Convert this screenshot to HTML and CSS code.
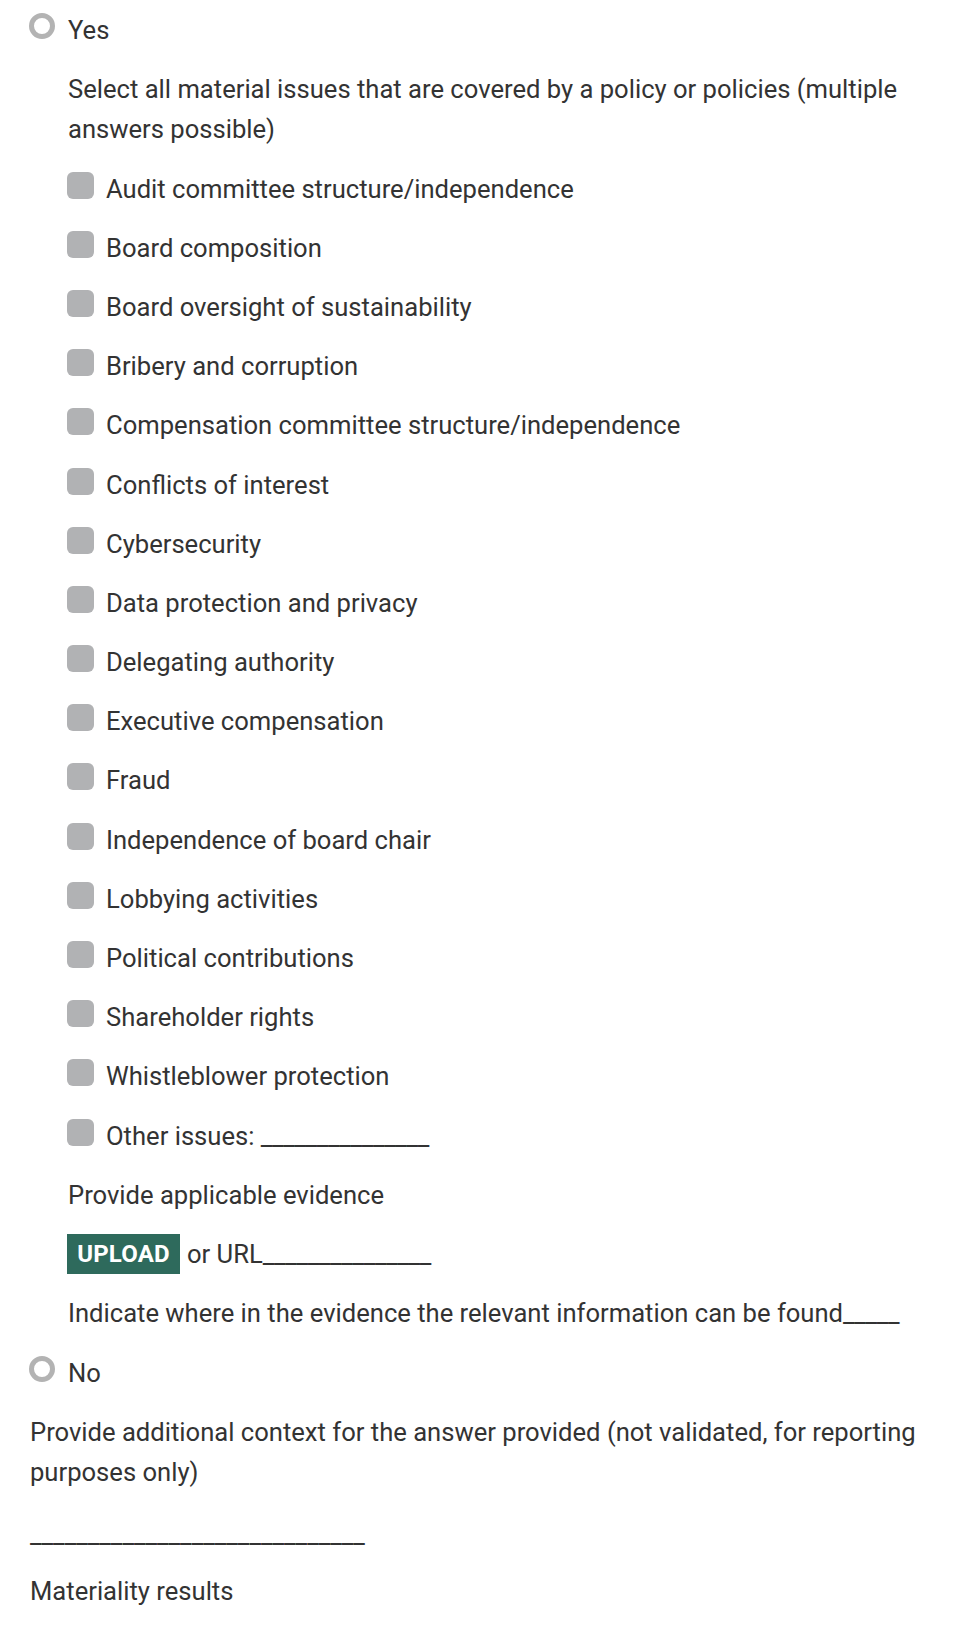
FILE: index.html
```html
<!DOCTYPE html>
<html lang="en">
<head>
<meta charset="utf-8">
<title>Material issues</title>
<link rel="stylesheet" href="styles.css">
</head>
<body>
<main class="question">
  <div class="radio-row">
    <span class="radio"></span>
    <span class="label">Yes</span>
  </div>
  <div class="nested">
    <p class="para">Select all material issues that are covered by a policy or policies (multiple answers possible)</p>
    <ul class="checks">
      <li class="check-row"><span class="box"></span><span>Audit committee structure/independence</span></li>
      <li class="check-row"><span class="box"></span><span>Board composition</span></li>
      <li class="check-row"><span class="box"></span><span>Board oversight of sustainability</span></li>
      <li class="check-row"><span class="box"></span><span>Bribery and corruption</span></li>
      <li class="check-row"><span class="box"></span><span>Compensation committee structure/independence</span></li>
      <li class="check-row"><span class="box"></span><span>Conflicts of interest</span></li>
      <li class="check-row"><span class="box"></span><span>Cybersecurity</span></li>
      <li class="check-row"><span class="box"></span><span>Data protection and privacy</span></li>
      <li class="check-row"><span class="box"></span><span>Delegating authority</span></li>
      <li class="check-row"><span class="box"></span><span>Executive compensation</span></li>
      <li class="check-row"><span class="box"></span><span>Fraud</span></li>
      <li class="check-row"><span class="box"></span><span>Independence of board chair</span></li>
      <li class="check-row"><span class="box"></span><span>Lobbying activities</span></li>
      <li class="check-row"><span class="box"></span><span>Political contributions</span></li>
      <li class="check-row"><span class="box"></span><span>Shareholder rights</span></li>
      <li class="check-row"><span class="box"></span><span>Whistleblower protection</span></li>
      <li class="check-row"><span class="box"></span><span>Other issues: <span class="blank">_______________</span></span></li>
    </ul>
    <p class="para">Provide applicable evidence</p>
    <p class="para upload-row"><span class="upload">UPLOAD</span><span>or URL<span class="blank">_______________</span></span></p>
    <p class="para">Indicate where in the evidence the relevant information can be found<span class="blank">_____</span></p>
  </div>
  <div class="radio-row">
    <span class="radio"></span>
    <span class="label">No</span>
  </div>
  <p class="para">Provide additional context for the answer provided (not validated, for reporting purposes only)</p>
  <p class="para"><span class="blank blank-lg">_____________________________</span></p>
  <p class="para">Materiality results</p>
</main>
</body>
</html>
```
FILE: styles.css
```css
html, body {
  margin: 0;
  padding: 0;
  background: #ffffff;
}

body {
  font-family: "Roboto", "Liberation Sans", sans-serif;
  font-size: 25.6px;
  line-height: 40px;
  color: #333333;
}

.question {
  display: flex;
  flex-direction: column;
  gap: 19.3px;
  padding: 10px 0 0 30px;
}

.radio-row {
  display: flex;
  align-items: flex-start;
  gap: 12px;
}

.radio {
  flex: none;
  box-sizing: border-box;
  width: 26px;
  height: 26px;
  margin-top: 3px;
  margin-left: -1px;
  border: 5.5px solid #b3b3b3;
  border-radius: 50%;
  background: #ffffff;
}

.label {
  margin-left: 1px;
}

.nested {
  display: flex;
  flex-direction: column;
  gap: 19.3px;
  padding-left: 38px;
}

.para {
  margin: 0;
}

.checks {
  list-style: none;
  margin: 0;
  padding: 0;
  display: flex;
  flex-direction: column;
  gap: 19.2px;
}

.check-row {
  display: flex;
  align-items: flex-start;
  gap: 12px;
  margin-left: -1px;
}

.box {
  flex: none;
  width: 27px;
  height: 27px;
  margin-top: 3px;
  border-radius: 6px;
  background: #b1b2b4;
}

.blank {
  white-space: nowrap;
  letter-spacing: -0.33px;
}

.blank-lg {
  letter-spacing: 0;
  line-height: 34px;
  vertical-align: -3px;
}

.upload-row {
  display: flex;
  align-items: center;
  gap: 7px;
}

.upload {
  flex: none;
  box-sizing: border-box;
  width: 113px;
  height: 40px;
  margin-left: -1px;
  background: #2e6a5c;
  color: #ffffff;
  font-weight: 700;
  font-size: 24px;
  letter-spacing: 0.2px;
  text-align: center;
  line-height: 40px;
}
```
